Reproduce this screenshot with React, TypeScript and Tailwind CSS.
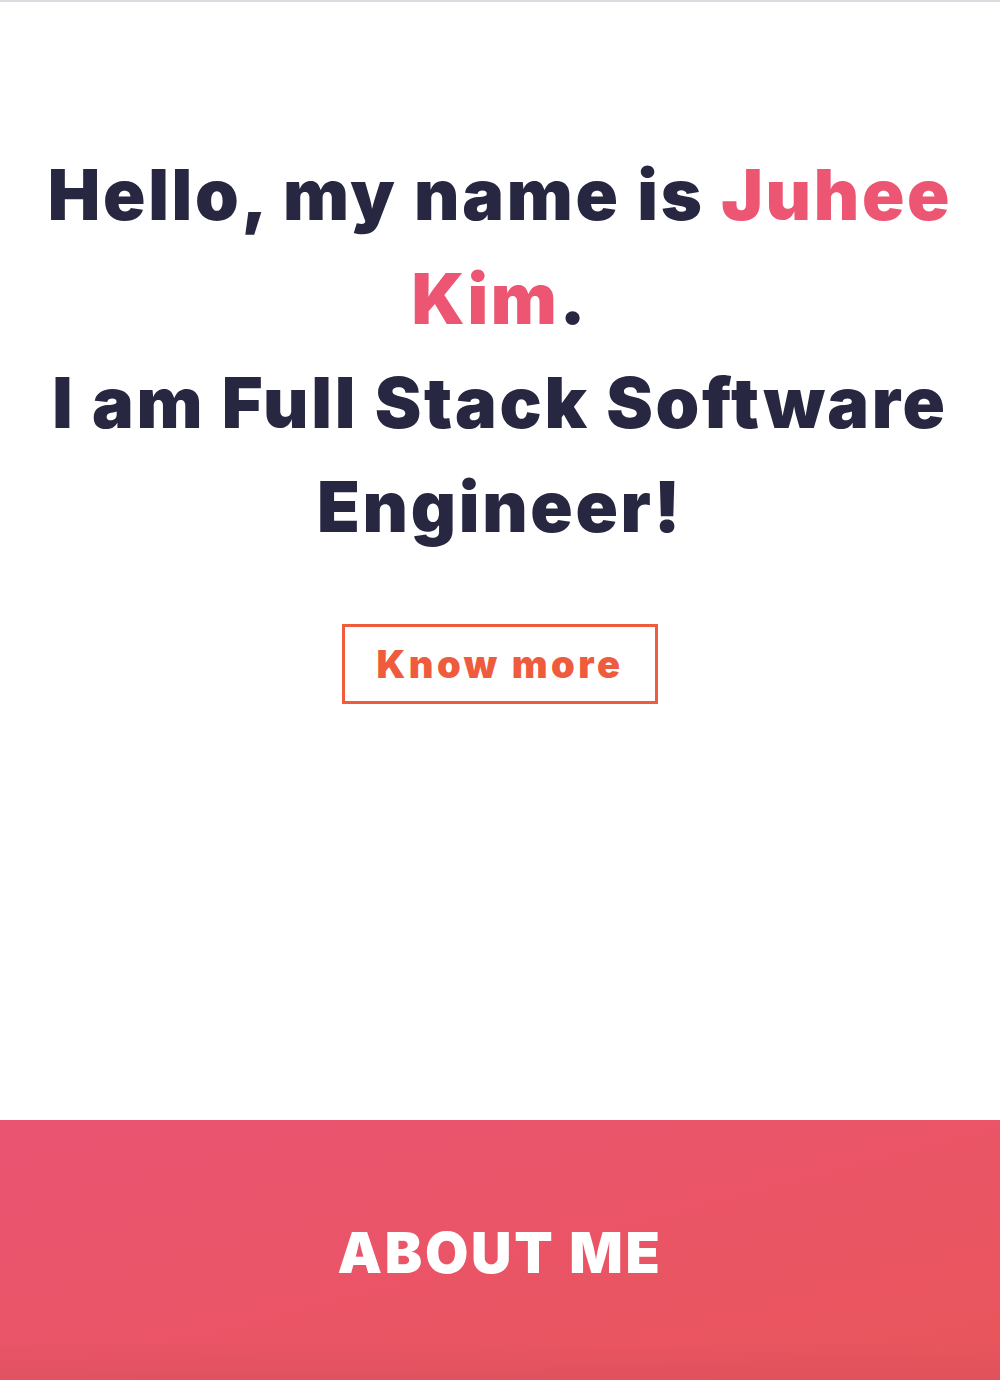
import React from "react";

export default function App() {
  return (
    <div className="w-[1000px] min-h-[1380px] bg-white overflow-hidden" style={{ fontFamily: "Inter, 'Noto Sans', sans-serif" }}>
      <div className="h-[2px] bg-[#dcdae1]" />
      <section className="h-[1118px] flex flex-col items-center pt-[141px] px-[30px]">
        <h1 className="text-center text-[70px] leading-[104px] font-black text-[#282741] tracking-[2.7px]">
          Hello, my name is <span className="text-[#ec5673]">Juhee Kim</span>.
          <br />
          I am Full Stack Software Engineer!
        </h1>
        <button className="mt-[65px] w-[316px] h-[80px] border-[3px] border-[#ef5b3d] text-[#ef5b3d] text-[38px] font-black tracking-[3.5px] flex items-center justify-center">
          Know more
        </button>
      </section>
      <section className="relative h-[260px] bg-gradient-to-br from-[#eb5472] to-[#e9555a] flex items-center justify-center">
        <h2 className="text-white text-[56px] font-black uppercase tracking-[2.7px] mt-[6px]">About me</h2>
        <div className="absolute left-0 right-0 bottom-0 h-[40px] bg-gradient-to-b from-transparent to-[#d9505e]/60" />
      </section>
    </div>
  );
}
